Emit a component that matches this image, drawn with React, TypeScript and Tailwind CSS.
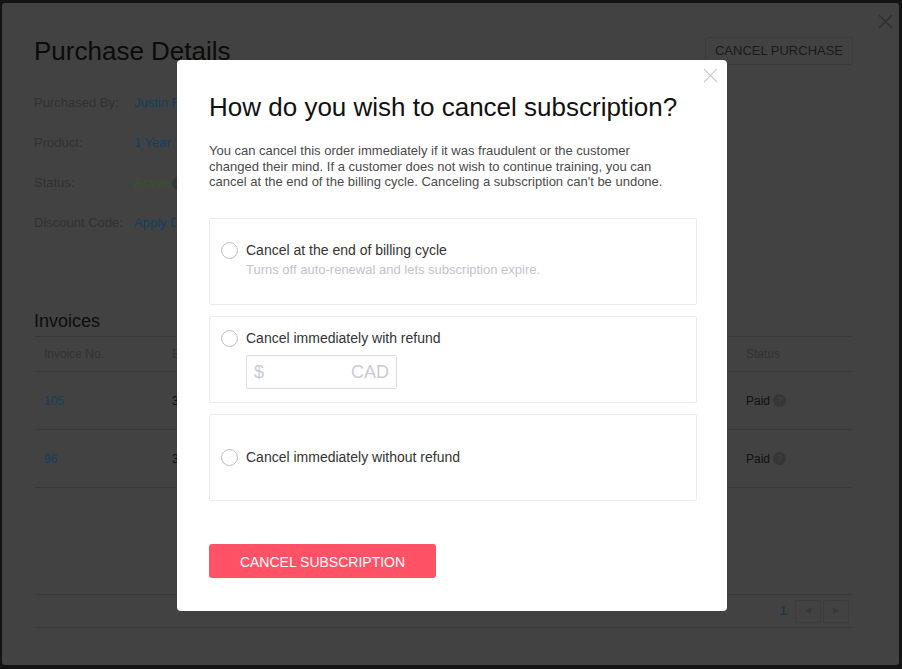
import React from "react";

const font = { fontFamily: '"Liberation Sans", Arial, sans-serif' };

function XIcon({ size, color, stroke = 1.4 }: { size: number; color: string; stroke?: number }) {
  return (
    <svg width={size} height={size} viewBox="0 0 16 16" fill="none">
      <path d="M1 1 L15 15 M15 1 L1 15" stroke={color} strokeWidth={stroke} />
    </svg>
  );
}

function Radio() {
  return <span className="block w-[17px] h-[17px] shrink-0 rounded-full border border-[#b9bcc2] bg-white" />;
}

function Q() {
  return (
    <span className="inline-flex items-center justify-center w-[13px] h-[13px] rounded-full bg-[#363636] text-[9px] text-[#474747] ml-[3px] align-middle">
      ?
    </span>
  );
}

export default function App() {
  const rows = [
    { no: "105", date: "3/15/2019", amount: "$120.00 CAD", paid: "3/15/2019" },
    { no: "96", date: "3/15/2018", amount: "$120.00 CAD", paid: "3/15/2018" },
  ];
  return (
    <div className="w-[902px] h-[669px] bg-[#141414] pt-[3px] pl-[2px] pr-[3px] pb-[4px] relative overflow-hidden" style={font}>
      <div className="relative h-full rounded-[3px] bg-[#424242] pl-[32px] pr-[46px] pt-[32px]">
        <div className="absolute top-[11px] right-[6px]">
          <XIcon size={15} color="#2f2f2f" stroke={1.6} />
        </div>
        <div className="flex items-center justify-between h-[32px]">
          <h1 className="text-[26px] leading-[30px] text-[#0b0b0b]">Purchase Details</h1>
          <button className="h-[28px] w-[148px] rounded-[3px] border border-[#3c3c3c] text-[13px] text-[#1a1a1a]">
            CANCEL PURCHASE
          </button>
        </div>

        <div className="mt-[16px] text-[13px]">
          <div className="flex items-center h-[40px]">
            <span className="w-[100px] text-[#313131]">Purchased By:</span>
            <span className="text-[#12405e]">Justin Roberts</span>
          </div>
          <div className="flex items-center h-[40px]">
            <span className="w-[100px] text-[#313131]">Product:</span>
            <span className="text-[#12405e]">1 Year Training Subscription</span>
          </div>
          <div className="flex items-center h-[40px]">
            <span className="w-[100px] text-[#313131]">Status:</span>
            <span className="text-[#3a5326]">Active</span>
            <Q />
          </div>
          <div className="flex items-center h-[40px]">
            <span className="w-[100px] text-[#313131]">Discount Code:</span>
            <span className="text-[#12405e]">Apply Discount</span>
          </div>
        </div>

        <h2 className="mt-[67px] text-[18px] leading-[22px] text-[#0d0d0d]">Invoices</h2>
        <div className="mt-[4px] border-t border-[#3a3a3a]">
          <div className="grid grid-cols-[128px_1fr_1fr_1fr_117px] h-[35px] items-center border-b border-[#3a3a3a] text-[12px] text-[#333333]">
            <span className="pl-[10px]">Invoice No.</span>
            <span className="pl-[10px]">Billing Date</span>
            <span className="pl-[10px]">Amount</span>
            <span className="pl-[10px]">Paid Date</span>
            <span className="pl-[10px]">Status</span>
          </div>
          {rows.map((r) => (
            <div key={r.no} className="grid grid-cols-[128px_1fr_1fr_1fr_117px] h-[58px] items-center border-b border-[#3a3a3a] text-[12px] text-[#111111]">
              <span className="pl-[10px] text-[#12405e]">{r.no}</span>
              <span className="pl-[10px]">{r.date}</span>
              <span className="pl-[10px]">{r.amount}</span>
              <span className="pl-[10px]">{r.paid}</span>
              <span className="pl-[10px] flex items-center">
                Paid
                <Q />
              </span>
            </div>
          ))}
        </div>

        <div className="mt-[106px] h-[34px] border-t border-b border-[#3a3a3a] flex items-center justify-end pr-[4px]">
          <span className="text-[13px] text-[#0f3550] mr-[8px]">1</span>
          <span className="w-[26px] h-[23px] border border-[#3c3c3c] rounded-[2px] flex items-center justify-center text-[8px] text-[#383838]">◀</span>
          <span className="ml-[2px] w-[26px] h-[23px] border border-[#3c3c3c] rounded-[2px] flex items-center justify-center text-[8px] text-[#383838]">▶</span>
        </div>
      </div>

      <div className="absolute left-[177px] top-[60px] w-[550px] bg-white rounded-[4px] pl-[32px] pr-[30px] pt-[32px] pb-[33px]">
        <button className="absolute top-[8px] right-[9px]">
          <XIcon size={15} color="#c9c9c9" stroke={1.3} />
        </button>
        <h3 className="text-[26px] leading-[30px] text-[#111111]">How do you wish to cancel subscription?</h3>
        <p className="mt-[21px] text-[13px] leading-[15.6px] text-[#4a4a4a] pr-[30px]">
          You can cancel this order immediately if it was fraudulent or the customer changed their mind. If a customer does not wish to continue training, you can cancel at the end of the billing cycle. Canceling a subscription can't be undone.
        </p>

        <div className="mt-[28px] flex flex-col gap-[11px]">
          <div className="h-[87px] border border-[#ebebeb] rounded-[2px] pl-[11px] flex items-center">
            <div className="flex gap-[8px] items-start -mt-[3px]">
              <Radio />
              <div className="flex flex-col">
                <span className="text-[14px] leading-[17px] text-[#333333]">Cancel at the end of billing cycle</span>
                <span className="mt-[3px] text-[13px] leading-[16px] text-[#c0c4cc]">Turns off auto-renewal and lets subscription expire.</span>
              </div>
            </div>
          </div>
          <div className="h-[87px] border border-[#ebebeb] rounded-[2px] pl-[11px] flex items-center">
            <div className="flex gap-[8px] items-start">
              <Radio />
              <div className="flex flex-col">
                <span className="text-[14px] leading-[17px] text-[#333333]">Cancel immediately with refund</span>
                <div className="mt-[8px] w-[151px] h-[34px] border border-[#dcdfe4] rounded-[2px] flex items-center justify-between px-[7px] text-[18px] leading-[20px] text-[#c8ccd2]">
                  <span>$</span>
                  <span>CAD</span>
                </div>
              </div>
            </div>
          </div>
          <div className="h-[87px] border border-[#ebebeb] rounded-[2px] pl-[11px] flex items-center">
            <div className="flex gap-[8px] items-start">
              <Radio />
              <span className="text-[14px] leading-[17px] text-[#333333]">Cancel immediately without refund</span>
            </div>
          </div>
        </div>

        <button className="mt-[43px] h-[34px] w-[227px] rounded-[3px] bg-[#ff5267] text-white text-[14px] leading-[16px] pt-[2px]">
          CANCEL SUBSCRIPTION
        </button>
      </div>
    </div>
  );
}
